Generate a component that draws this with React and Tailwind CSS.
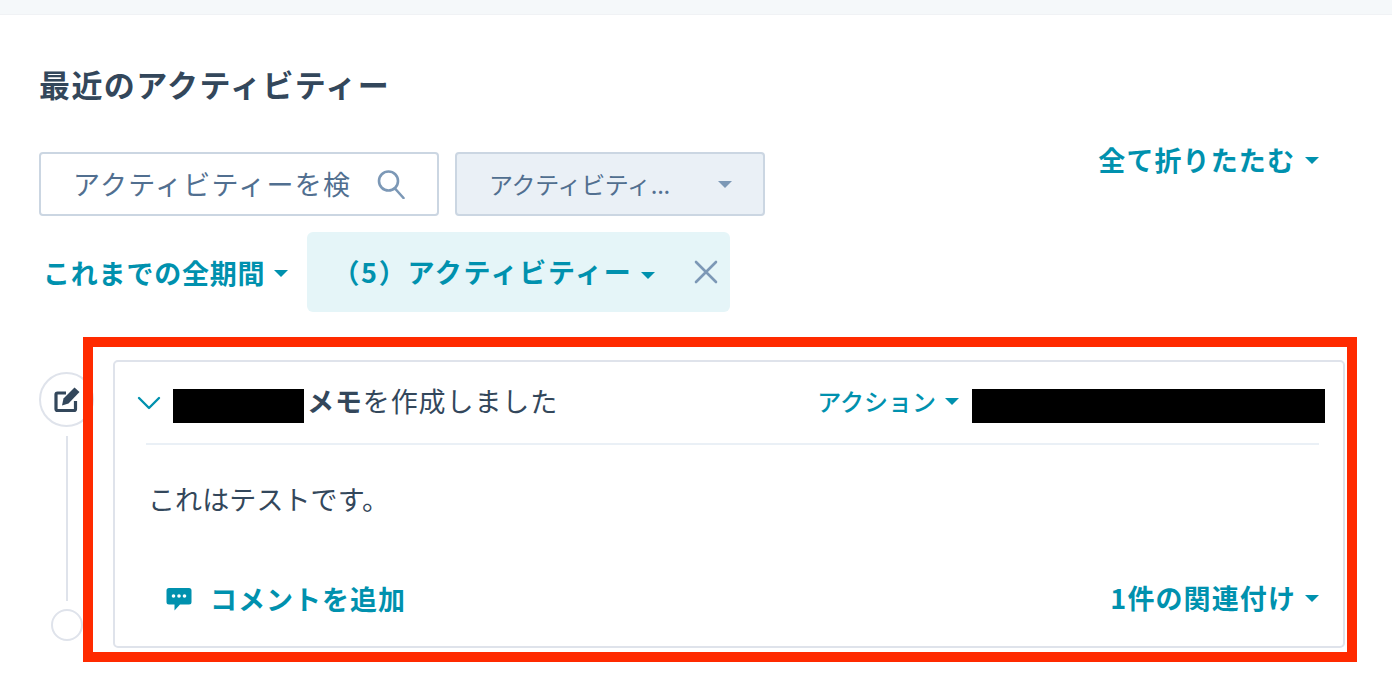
import React from 'react';

const font = { fontFamily: '"Noto Sans CJK JP", "Noto Sans", sans-serif' };

function Caret({ className = 'border-t-[#0091ae]' }) {
  return (
    <span
      className={`inline-block w-0 h-0 border-x-[7px] border-x-transparent border-t-[7px] ${className}`}
    />
  );
}

function SearchIcon() {
  return (
    <svg width="28" height="30" viewBox="0 0 28 30" fill="none" stroke="#7c98b6" strokeWidth="2.6">
      <circle cx="11.5" cy="12" r="9.5" />
      <path d="M18 19.5 L26.5 29" strokeLinecap="round" />
    </svg>
  );
}

function CloseIcon() {
  return (
    <svg width="24" height="24" viewBox="0 0 24 24" fill="none" stroke="#7c98b6" strokeWidth="2.6">
      <path d="M2 2 L22 22 M22 2 L2 22" strokeLinecap="round" />
    </svg>
  );
}

function EditIcon() {
  return (
    <svg width="26" height="27" viewBox="0 0 26 27" fill="none">
      <path
        d="M12 7 H3.5 a1.5 1.5 0 0 0 -1.5 1.5 V23 a1.5 1.5 0 0 0 1.5 1.5 H20 a1.5 1.5 0 0 0 1.5 -1.5 V15"
        stroke="#33475b"
        strokeWidth="3.2"
      />
      <path d="M8 19.5 L9.5 12.5 L20.5 1.5 L25.5 6 L14.5 17.5 Z" fill="#33475b" />
    </svg>
  );
}

function CommentIcon() {
  return (
    <svg width="26" height="24" viewBox="0 0 26 24">
      <path
        d="M3 1 H23 a2.5 2.5 0 0 1 2.5 2.5 V15 a2.5 2.5 0 0 1 -2.5 2.5 H14 L8.5 23.5 V17.5 H3 a2.5 2.5 0 0 1 -2.5 -2.5 V3.5 A2.5 2.5 0 0 1 3 1 Z"
        fill="#0091ae"
      />
      <circle cx="7.5" cy="9" r="1.8" fill="#fff" />
      <circle cx="13" cy="9" r="1.8" fill="#fff" />
      <circle cx="18.5" cy="9" r="1.8" fill="#fff" />
    </svg>
  );
}

export default function App() {
  return (
    <div style={font} className="relative w-full h-[698px] overflow-hidden bg-white text-[#33475b]">
      <div className="h-[15px] bg-[#f5f8fa] border-b border-[#f0f2f5]" />

      <div className="pl-[39px] pr-[72px]">
        <h1 className="pt-[48px] text-[31px] leading-[42px] font-bold tracking-[1.4px] whitespace-nowrap">
          最近のアクティビティー
        </h1>

        <div className="flex items-start justify-between mt-[47px]">
          <div className="flex gap-[16px]">
            <div className="flex items-center justify-between w-[400px] h-[64px] pl-[32px] pr-[32px] rounded-[4px] border-2 border-[#cbd6e2] bg-white">
              <span className="text-[27px] tracking-[1.3px] text-[#516f90] whitespace-nowrap">アクティビティーを検</span>
              <SearchIcon />
            </div>
            <div className="flex items-center justify-between w-[310px] h-[64px] pl-[32px] pr-[31px] rounded-[4px] border-2 border-[#cbd6e2] bg-[#eaf0f6]">
              <span className="text-[24px] tracking-[-0.3px] text-[#516f90] whitespace-nowrap">アクティビティ...</span>
              <Caret className="border-t-[#7c98b6]" />
            </div>
          </div>
          <button className="flex items-center gap-[10px] mt-[-12px] mr-[1px] text-[27px] font-bold tracking-[1.1px] text-[#0091ae] whitespace-nowrap">
            全て折りたたむ
            <Caret />
          </button>
        </div>

        <div className="flex items-center mt-[16px]">
          <button className="flex items-center gap-[9px] ml-[4px] mt-[3px] text-[27px] font-bold tracking-[0.8px] text-[#0091ae] whitespace-nowrap">
            これまでの全期間
            <Caret />
          </button>
          <div className="flex items-center h-[80px] w-[423px] ml-[19px] pl-[25px] pr-[12px] rounded-[6px] bg-[#e5f5f8]">
            <span className="text-[27px] font-bold tracking-[1.7px] text-[#0091ae] whitespace-nowrap">（5）アクティビティー</span>
            <span className="ml-[9px]"><Caret /></span>
            <span className="ml-[auto]"><CloseIcon /></span>
          </div>
        </div>
      </div>

      <div className="flex items-start pl-[39px] mt-[48px]">
        <div className="flex flex-col items-center w-[55px] shrink-0 pt-[12px]">
          <div className="flex items-center justify-center w-[55px] h-[55px] rounded-full border-2 border-[#dfe3eb] bg-white">
            <EditIcon />
          </div>
          <div className="w-[2px] h-[165px] mt-[9px] bg-[#dfe3eb]" />
          <div className="w-[32px] h-[32px] mt-[8px] rounded-full border-2 border-[#dfe3eb] bg-white" />
        </div>

        <div className="w-[1232px] h-[288px] ml-[19px] rounded-[5px] border-2 border-[#dfe3eb] bg-white">
          <div className="flex items-center h-[81px] pl-[21px] pr-[18px]">
            <svg width="26" height="16" viewBox="0 0 26 16" fill="none" stroke="#0091ae" strokeWidth="2.4">
              <path d="M3 3 L13 13 L23 3" strokeLinecap="round" strokeLinejoin="round" />
            </svg>
            <div className="w-[131px] h-[34px] ml-[11px] mt-[7px] bg-black" />
            <span className="ml-[3px] mb-[2px] text-[27px] tracking-[0.9px] whitespace-nowrap">
              <span className="font-bold">メモ</span>を作成しました
            </span>
            <span className="flex items-center gap-[9px] ml-auto mb-[3px] text-[24px] font-medium text-[#0091ae] whitespace-nowrap">
              アクション
              <Caret />
            </span>
            <div className="w-[353px] h-[34px] ml-[13px] mt-[7px] bg-black" />
          </div>

          <div className="h-[2px] ml-[31px] mr-[24px] bg-[#eaf0f6]" />

          <p className="mt-[35px] ml-[33px] text-[27px] leading-[38px] tracking-[0.1px]">これはテストです。</p>

          <div className="flex items-center justify-between mt-[60px] pl-[51px] pr-[24px]">
            <span className="flex items-center gap-[18px] text-[27px] font-bold tracking-[1px] text-[#0091ae] whitespace-nowrap">
              <CommentIcon />
              コメントを追加
            </span>
            <span className="flex items-center gap-[9px] mb-[1px] text-[27px] font-bold tracking-[1.1px] text-[#0091ae] whitespace-nowrap">
              1件の関連付け
              <Caret />
            </span>
          </div>
        </div>
      </div>

      {/* annotation drawn over the screenshot */}
      <div className="absolute left-[83px] top-[337px] w-[1274px] h-[325px] border-[10px] border-[#ff2a00] pointer-events-none" />
    </div>
  );
}
